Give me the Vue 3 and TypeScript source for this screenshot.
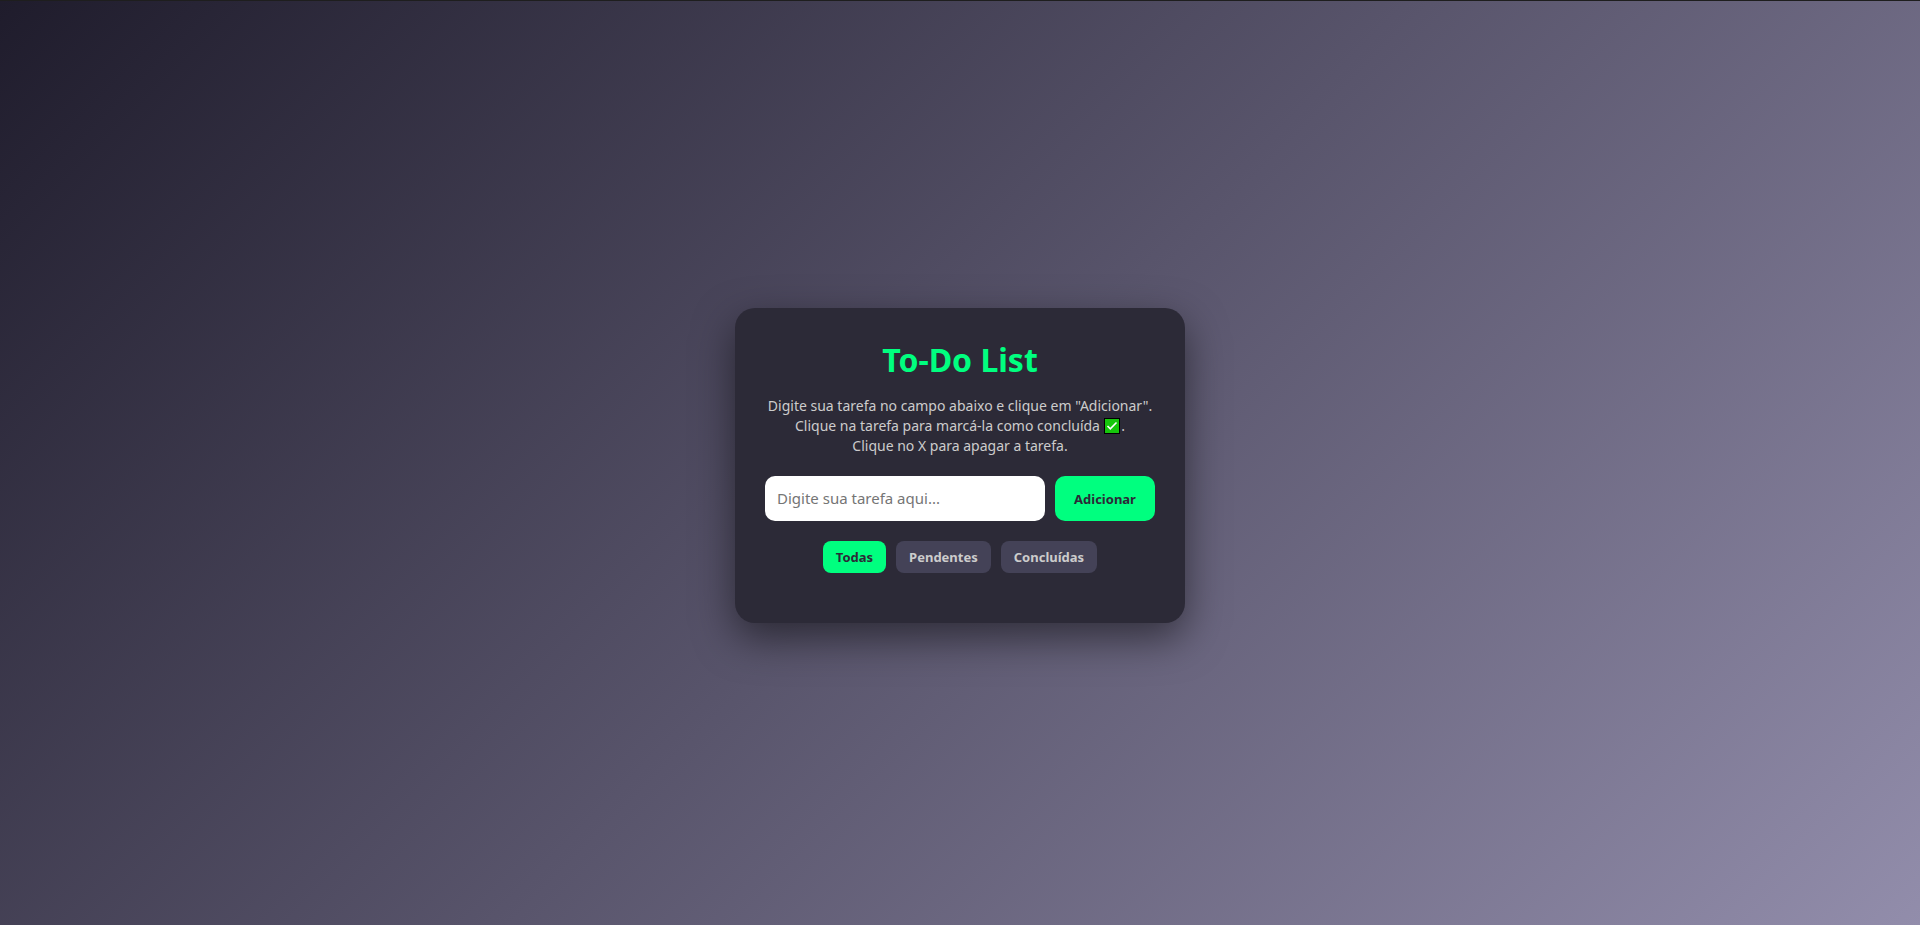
<script setup lang="ts">
import { ref } from 'vue'

interface Filter {
  id: string
  label: string
}

const filters: Filter[] = [
  { id: 'all', label: 'Todas' },
  { id: 'pending', label: 'Pendentes' },
  { id: 'done', label: 'Concluídas' },
]

interface Task {
  id: number
  text: string
  done: boolean
}

const active = ref('all')
const draft = ref('')
const tasks = ref<Task[]>([])

function visible(task: Task): boolean {
  if (active.value === 'pending') return !task.done
  if (active.value === 'done') return task.done
  return true
}

function addTask(): void {
  const text = draft.value.trim()
  if (!text) return
  tasks.value.push({ id: Date.now(), text, done: false })
  draft.value = ''
}

function removeTask(id: number): void {
  tasks.value = tasks.value.filter((task) => task.id !== id)
}
</script>

<template>
  <div class="page">
    <main class="card">
      <h1>To-Do List</h1>
      <p class="help">
        Digite sua tarefa no campo abaixo e clique em "Adicionar".<br />
        Clique na tarefa para marcá-la como concluída
        <svg class="check" viewBox="0 0 16 16" role="img" aria-label="concluída">
          <rect x="0.5" y="0.5" width="15" height="15" fill="#16c60c" stroke="#000" />
          <path d="M3.5 8 6.3 10.8 12.5 4.5" fill="none" stroke="#fff" stroke-width="1.6" />
        </svg>
        .<br />
        Clique no X para apagar a tarefa.
      </p>
      <form class="entry" @submit.prevent="addTask">
        <input v-model="draft" type="text" aria-label="Tarefa" placeholder="Digite sua tarefa aqui..." />
        <button type="submit">Adicionar</button>
      </form>
      <div class="filters">
        <button
          v-for="f in filters"
          :key="f.id"
          type="button"
          :class="{ active: active === f.id }"
          @click="active = f.id"
        >
          {{ f.label }}
        </button>
      </div>
      <ul class="tasks">
        <li v-for="task in tasks.filter(visible)" :key="task.id" :class="{ done: task.done }">
          <button type="button" @click="task.done = !task.done">{{ task.text }}</button>
          <button type="button" @click="removeTask(task.id)">X</button>
        </li>
      </ul>
    </main>
  </div>
</template>

<style>
body {
  margin: 0;
}
</style>

<style scoped>
.page {
  box-sizing: border-box;
  min-height: 100vh;
  padding: 25px 20px 20px;
  display: flex;
  align-items: center;
  justify-content: center;
  border-top: 1px solid #1e1e1e;
  background: linear-gradient(135deg, #1f1c2c, #928dab);
  font-family: 'Segoe UI', 'Noto Sans', 'Open Sans', sans-serif;
}
.card {
  box-sizing: border-box;
  width: 100%;
  max-width: 450px;
  padding: 30px;
  border-radius: 20px;
  background: #2c2a37;
  box-shadow: 0 15px 40px rgba(0, 0, 0, 0.5);
  text-align: center;
}
h1 {
  margin: 0 0 14px;
  color: #00ff7f;
  font-size: 32px;
  line-height: 44px;
}
.help {
  margin: 0 0 20px;
  color: #ccc;
  font-size: 14px;
  line-height: 20px;
}
.check {
  display: inline-block;
  width: 16px;
  height: 16px;
  margin-right: -2px;
  vertical-align: -3px;
}
.entry {
  display: flex;
  gap: 10px;
  margin-bottom: 20px;
}
.entry input {
  flex: 1;
  min-width: 0;
  padding: 12px;
  border: 0;
  border-radius: 10px;
  font: 15px/21px 'Segoe UI', 'Noto Sans', sans-serif;
}
.entry button {
  width: 100px;
  border: 0;
  border-radius: 10px;
  background: #00ff7f;
  color: #2c2a37;
  font: bold 13px 'Segoe UI', 'Noto Sans', sans-serif;
}
.filters {
  display: flex;
  justify-content: center;
  gap: 10px;
}
.filters button {
  padding: 6px 13px;
  border: 0;
  border-radius: 8px;
  background: #444257;
  color: #ccc;
  font: bold 13px/20px 'Segoe UI', 'Noto Sans', sans-serif;
}
.filters button.active {
  background: #00ff7f;
  color: #2c2a37;
}
.tasks {
  margin: 20px 0 0;
  padding: 0;
  list-style: none;
}
.tasks li {
  display: flex;
  justify-content: space-between;
}
.tasks li.done {
  text-decoration: line-through;
}
</style>
